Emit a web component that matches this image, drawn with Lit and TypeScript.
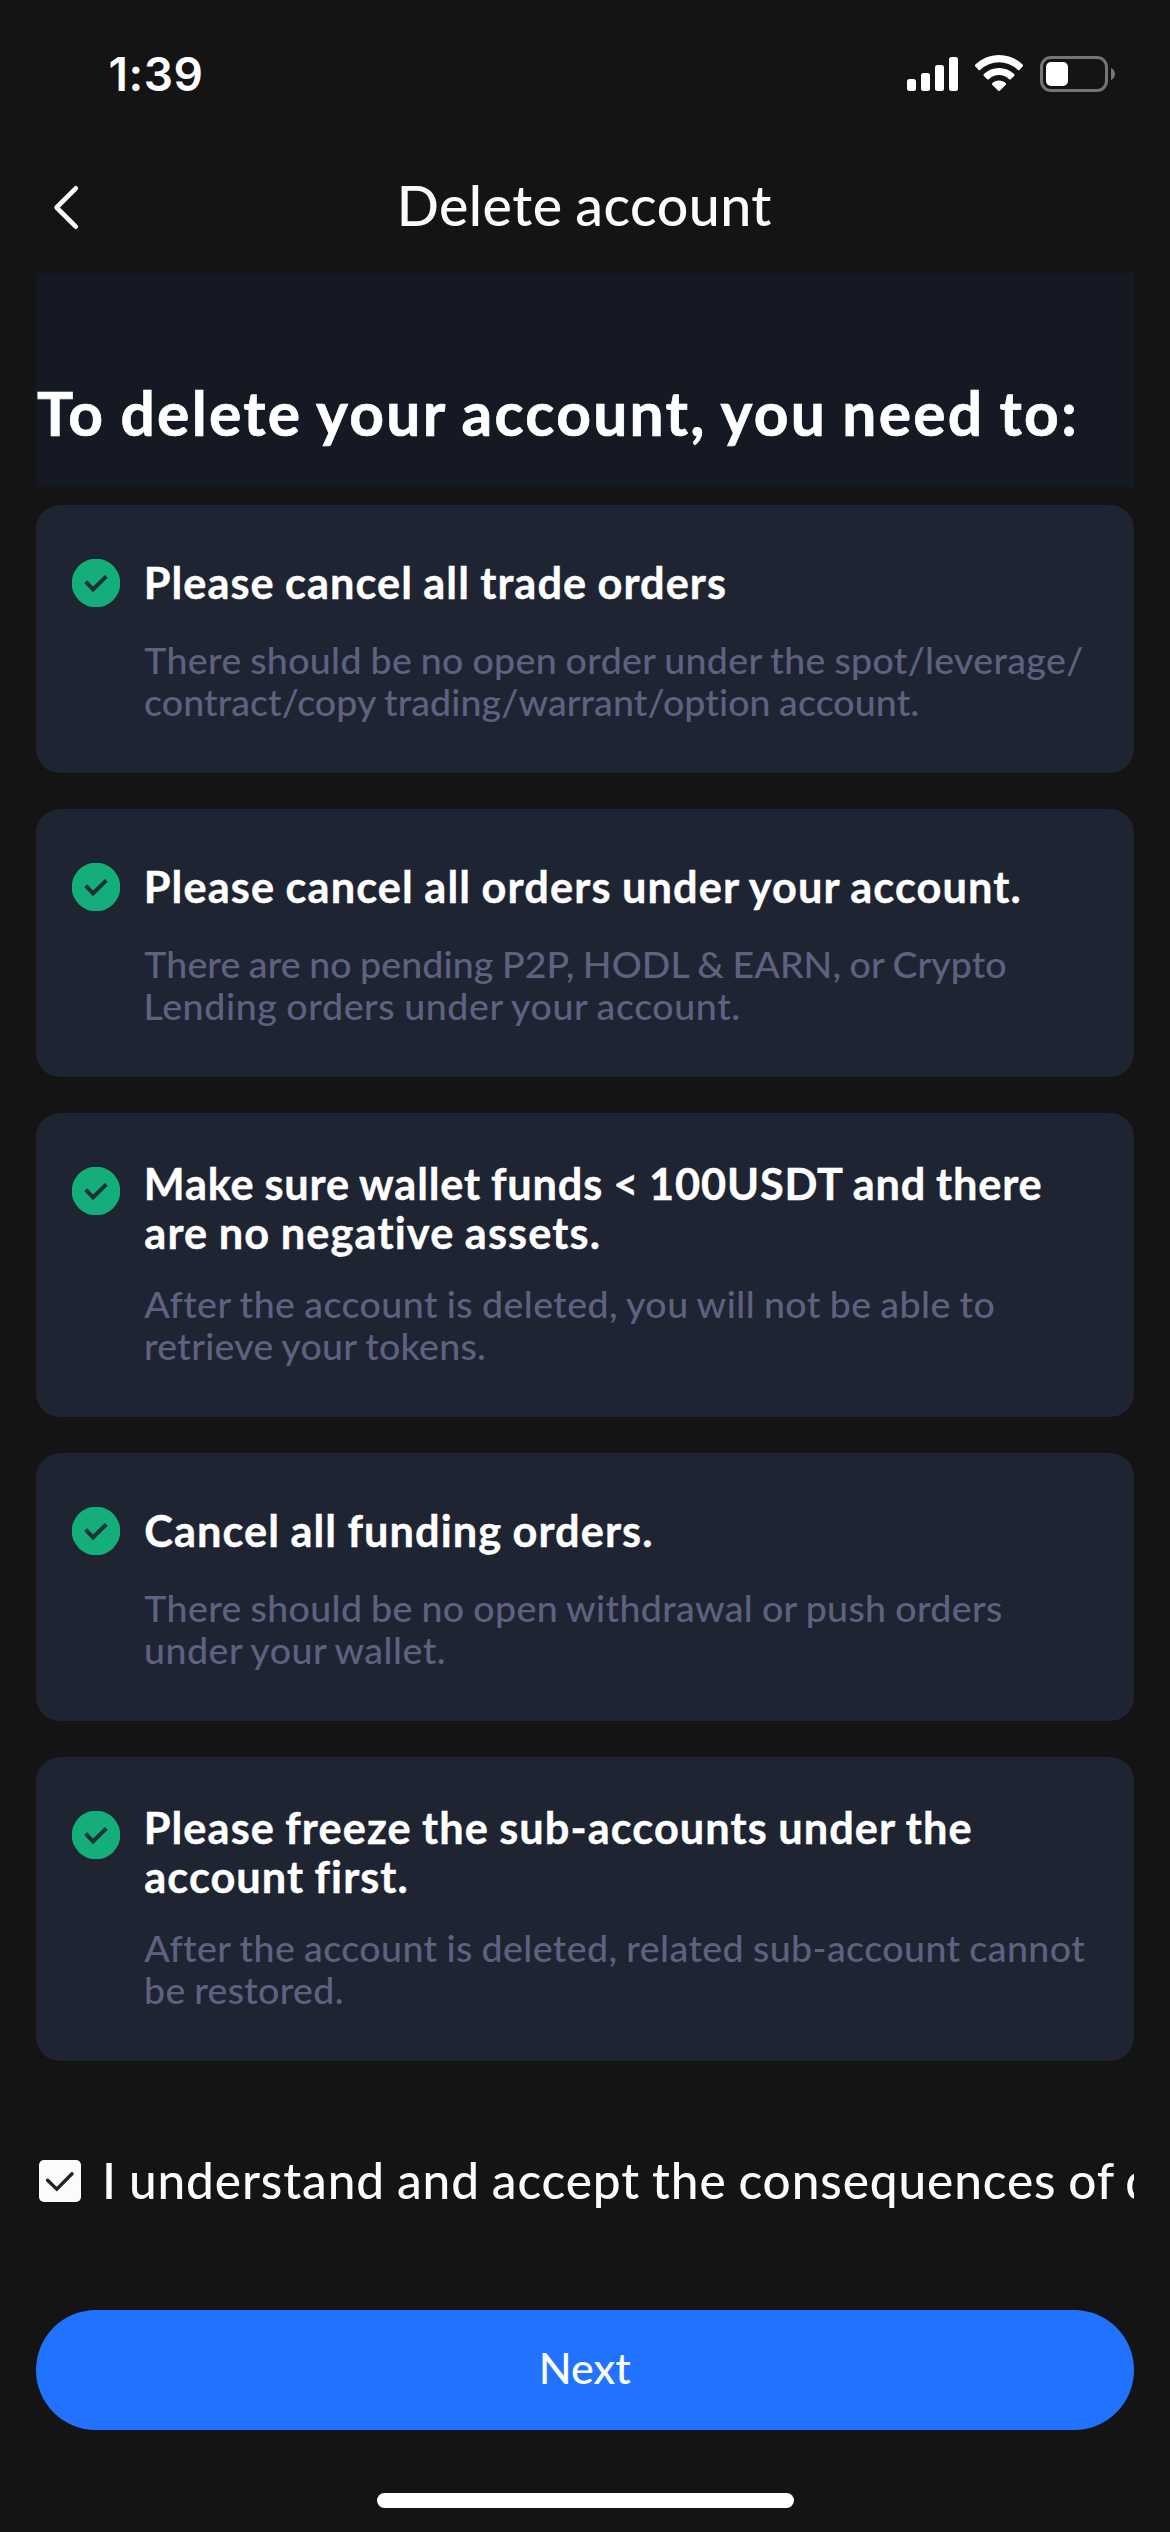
import { LitElement, html, css, svg } from "lit";
import { customElement, property } from "lit/decorators.js";

/** One line of text whose ink spans from `left` to `left + width` inside its container. */
@customElement("text-line")
export class TextLine extends LitElement {
  @property() text = "";
  @property({ type: Number }) left = 0;
  @property({ type: Number }) width = 0;

  static styles = css`
    :host { display: block; white-space: pre; }
    .run { display: inline-block; vertical-align: top; font-variant-ligatures: none; word-spacing: -0.03em; }
  `;

  render() {
    return html`<span class="run">${this.text}</span>`;
  }

  updated() {
    const run = this.renderRoot.querySelector(".run") as HTMLElement;
    const ctx = document.createElement("canvas").getContext("2d")!;
    const cs = getComputedStyle(run);
    ctx.font = `${cs.fontWeight} ${cs.fontSize} ${cs.fontFamily}`;
    const m = ctx.measureText(this.text);
    const bearings = m.width - m.actualBoundingBoxRight - m.actualBoundingBoxLeft;
    run.style.letterSpacing = "0.01px";
    const ink = run.getBoundingClientRect().width - bearings;
    run.style.letterSpacing = `${(this.width - ink) / Math.max(1, this.text.length - 1)}px`;
    run.style.marginLeft = `${this.left + m.actualBoundingBoxLeft}px`;
  }
}

type Line = [text: string, left: number, right: number];
interface Requirement { title: Line[]; note: Line[]; }

const requirements: Requirement[] = [
  {
    title: [["Please cancel all trade orders", 146.7, 725.3]],
    note: [
      ["There should be no open order under the spot/leverage/", 144.3, 1082.7],
      ["contract/copy trading/warrant/option account.", 145, 917.8],
    ],
  },
  {
    title: [["Please cancel all orders under your account.", 146.7, 1020]],
    note: [
      ["There are no pending P2P, HODL & EARN, or Crypto", 144.3, 1005.8],
      ["Lending orders under your account.", 146.5, 738.7],
    ],
  },
  {
    title: [
      ["Make sure wallet funds < 100USDT and there", 146.7, 1041],
      ["are no negative assets.", 145.3, 599],
    ],
    note: [
      ["After the account is deleted, you will not be able to", 144.3, 994],
      ["retrieve your tokens.", 146, 484.3],
    ],
  },
  {
    title: [["Cancel all funding orders.", 145.3, 651.5]],
    note: [
      ["There should be no open withdrawal or push orders", 144.3, 1001.5],
      ["under your wallet.", 146, 444],
    ],
  },
  {
    title: [
      ["Please freeze the sub-accounts under the", 146.7, 970.8],
      ["account first.", 145.3, 406.7],
    ],
    note: [
      ["After the account is deleted, related sub-account cannot", 144.3, 1085.7],
      ["be restored.", 146, 341.8],
    ],
  },
];

const line = ([text, left, right]: Line, origin: number) =>
  html`<text-line .text=${text} .left=${left - origin} .width=${right - left}></text-line>`;

@customElement("app-root")
export class AppRoot extends LitElement {
  static styles = css`
    :host {
      display: flex;
      flex-direction: column;
      box-sizing: border-box;
      width: 1170px;
      height: 2532px;
      overflow: hidden;
      background: #141414;
      color: #fff;
      font-family: "Lato", "Noto Sans", sans-serif;
    }
    svg { display: block; flex: none; }
    .status {
      display: flex;
      justify-content: space-between;
      height: 148px;
      padding: 0 55px 0 110px;
    }
    .time {
      font: 600 46px/148px "Inter", sans-serif;
    }
    .indicators { display: flex; align-items: flex-start; gap: 17px; padding-top: 55px; }
    .header {
      display: flex;
      height: 125px;
      line-height: 113px;
      font-size: 55.5px;
      font-weight: 500;
      color: #fbfbfc;
    }
    .back { padding: 36px 0 0 51px; }
    .content { display: flex; flex-direction: column; padding: 0 36px; }
    .intro {
      height: 76px;
      padding: 102px 0 36px;
      background: #151924;
      font-size: 60.5px;
      font-weight: 700;
      line-height: 76px;
      -webkit-text-stroke: 0.7px #fff;
    }
    .list { display: flex; flex-direction: column; gap: 36px; padding-top: 18px; }
    .card {
      display: flex;
      gap: 24px;
      box-sizing: border-box;
      padding: 46px 0 36px 36px;
      border-radius: 24px;
      background: #1f2432;
    }
    .mark { padding-top: 8px; }
    .title {
      display: flex;
      flex-direction: column;
      justify-content: center;
      min-height: 62px;
      font-size: 43.3px;
      font-weight: 700;
      line-height: 49px;
      -webkit-text-stroke: 0.4px #fff;
    }
    .note {
      padding: 26px 0 14px;
      font-size: 37.5px;
      font-weight: 500;
      line-height: 42px;
      color: #5d6280;
    }
    .accept {
      display: flex;
      align-items: center;
      height: 76px;
      margin-top: 82px;
      padding-left: 3px;
      overflow: hidden;
      font-size: 49.5px;
      font-weight: 500;
      line-height: 72px;
      color: #fbfbfc;
    }
    .accept text-line { flex: none; margin-bottom: 3px; }
    .accept .statement { flex: none; width: 1032.3px; }
    .next {
      box-sizing: border-box;
      height: 120px;
      margin-top: 91px;
      border: 0;
      padding: 0 0 4px;
      border-radius: 60px;
      background: #2173ff;
      color: #fbfbfc;
      font: 500 43px/114px "Lato", "Noto Sans", sans-serif;
      text-align: left;
    }
    .home {
      width: 417px;
      height: 15px;
      margin: 63px 0 0 377px;
      border-radius: 7.5px;
      background: #fff;
    }
  `;

  private mark() {
    return svg`<svg width="48" height="48" viewBox="0 0 48 48">
      <circle cx="24" cy="24" r="24.3" fill="#14ae7b"/>
      <path d="M13.7 22.7 21 30.4 34.3 17.3" fill="none" stroke="#1f2f38" stroke-width="4" stroke-linejoin="miter"/>
    </svg>`;
  }

  render() {
    return html`
      <div class="status">
        <div class="time">${line(["1:39", 110.5, 201.5], 110)}</div>
        <div class="indicators">
          <svg width="51" height="37" viewBox="0 0 51 37" fill="#fff">
            <rect x="0" y="24" width="9" height="12" rx="2.5"/>
            <rect x="14" y="18" width="9" height="18" rx="2.5"/>
            <rect x="28" y="10" width="9" height="26" rx="2.5"/>
            <rect x="42" y="2" width="9" height="34" rx="2.5"/>
          </svg>
          <svg width="48" height="37" viewBox="0 0 48 37" fill="#fff">
            <path d="M24 0C33 0 41.5 3.5 47.6 9.6Q48.6 10.6 47.6 11.6L44.6 14.8Q43.6 15.8 42.6 14.8A27 27 0 0 0 5.4 14.8Q4.4 15.8 3.4 14.8L.4 11.6Q-.6 10.6.4 9.6C6.500 3.500 15 0 24 0Z"/>
            <path d="M24 13C29.800 13 35.100 15.200 39.100 18.900Q40.100 19.900 39.100 20.900L36 24Q35 25 33.900 24A14.500 14.500 0 0 0 14.100 24Q13 25 12 24L8.900 20.900Q7.900 19.900 8.900 18.900C12.900 15.200 18.200 13 24 13Z"/>
            <path d="M24 25.500C26.600 25.500 28.900 26.400 30.600 27.900Q31.600 28.900 30.600 29.900L25 35.500Q24 36.500 23 35.500L17.400 29.900Q16.400 28.900 17.400 27.900C19.100 26.400 21.400 25.500 24 25.500Z"/>
          </svg>
          <svg width="75" height="38" viewBox="0 0 75 38">
            <rect x="1.500" y="2.500" width="65" height="33" rx="9.500" fill="none" stroke="#757575" stroke-width="3"/>
            <rect x="6" y="7" width="22" height="24" rx="5" fill="#fff"/>
            <path d="M71 13C76.300 15 76.300 23 71 25Z" fill="#757575"/>
          </svg>
        </div>
      </div>
      <div class="header">
        <svg class="back" width="32" height="48" viewBox="0 0 32 48">
          <path d="M24.800 4.300 5.600 23.500 24.800 42.700" fill="none" stroke="#fbfbfc" stroke-width="4.600" stroke-linecap="round" stroke-linejoin="round"/>
        </svg>
        ${line(["Delete account", 400.7, 771.5], 83)}
      </div>
      <div class="content">
        <div class="intro">${line(["To delete your account, you need to:", 37, 1074.5], 36)}</div>
        <div class="list">
          ${requirements.map((r) => html`
            <div class="card">
              <div class="mark">${this.mark()}</div>
              <div class="body">
                <div class="title">${r.title.map((t) => line(t, 144))}</div>
                <div class="note">${r.note.map((t) => line(t, 144))}</div>
              </div>
            </div>`)}
        </div>
        <div class="accept">
          <svg width="42" height="42" viewBox="0 0 42 42">
            <rect width="42" height="42" rx="5" fill="#fbfbfc"/>
            <path d="M8.600 20.300 17.800 29.200 33 13.700" fill="none" stroke="#222" stroke-width="3.400" stroke-linecap="round"/>
          </svg>
          <div class="statement">${line(["I understand and accept the consequences of", 106, 1114.3], 81)}</div>
          ${line(["d", 1127.3, 1152], 1113.3)}
        </div>
        <button class="next">${line(["Next", 541.7, 631.2], 36)}</button>
      </div>
      <div class="home"></div>
    `;
  }
}
